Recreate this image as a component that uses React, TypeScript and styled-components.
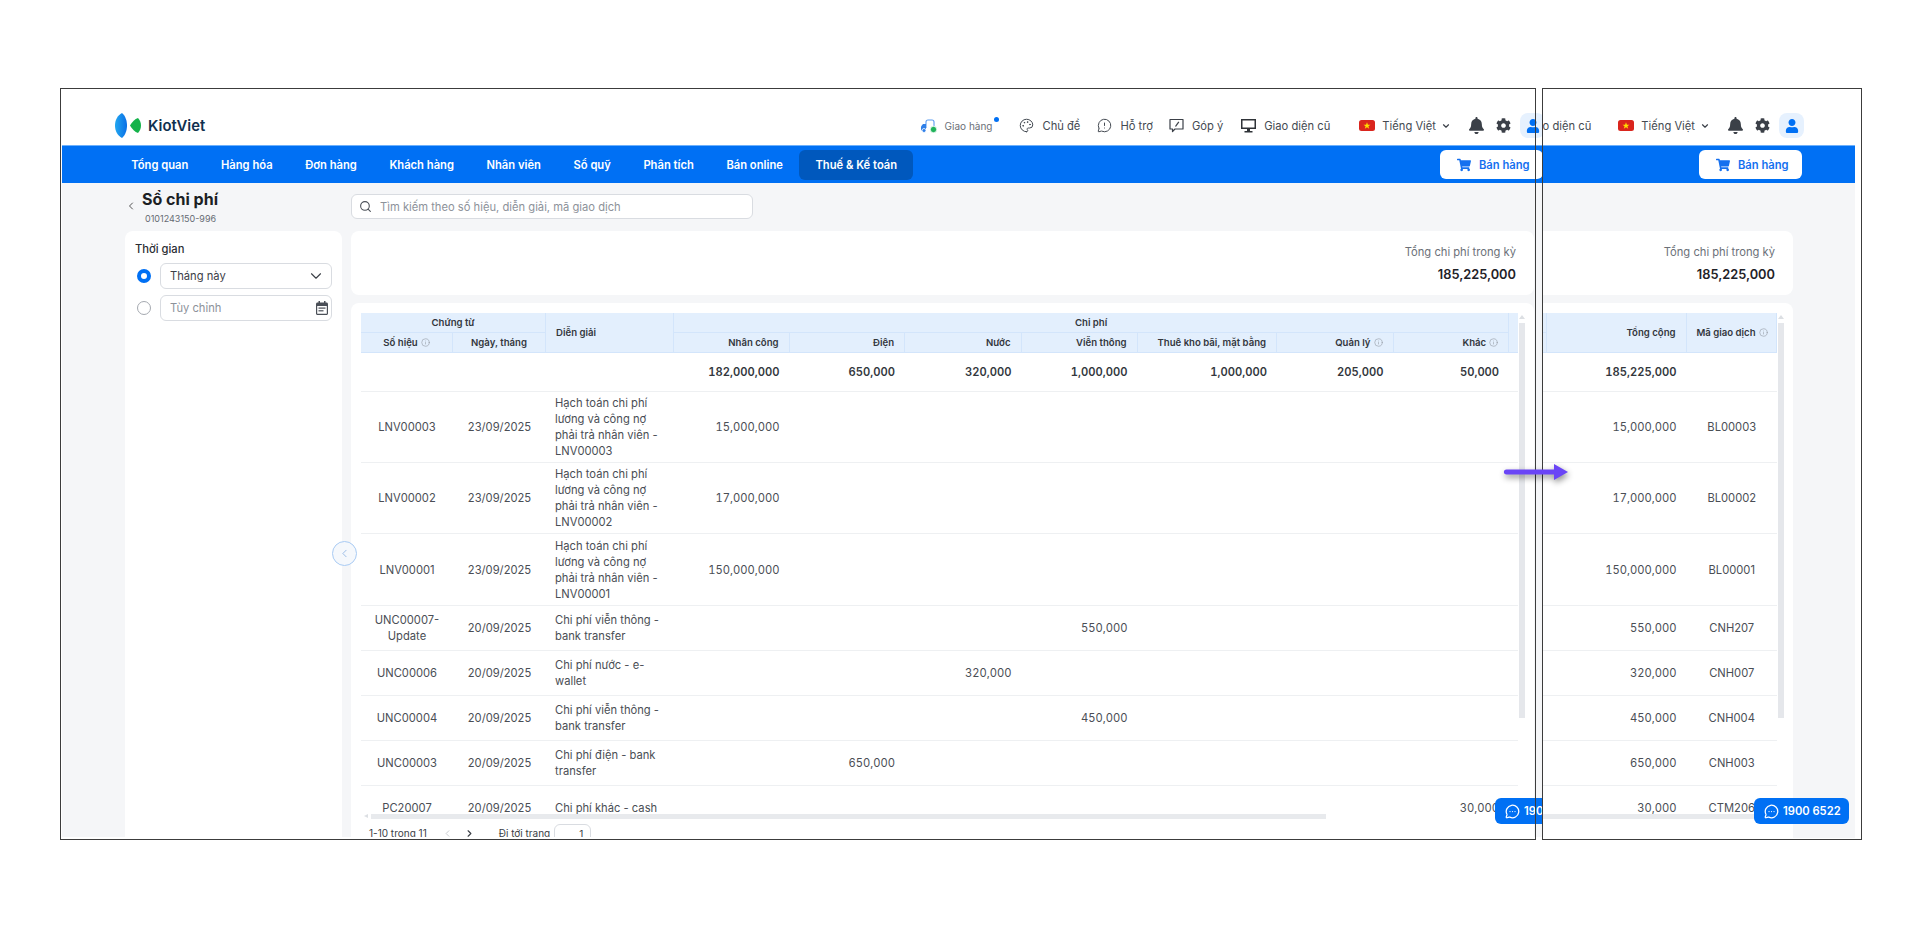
import React from "react";
import styled, { createGlobalStyle } from "styled-components";
import { Search, ChevronDown, ChevronLeft, ChevronRight, Palette, Info, MessageCircleMore, MessageCircleWarning } from "lucide-react";
import { FaBell, FaCog, FaUser, FaShoppingCart } from "react-icons/fa";

const Global = createGlobalStyle`
  html, body { margin: 0; padding: 0; background: #fff; }
  body { font-family: Inter, "Noto Sans", sans-serif; color: #333; }
  * { box-sizing: border-box; }
`;

const Canvas = styled.div`
  position: relative;
  display: flex;
  height: 942px;
  padding: 88px 0 0 60px;
  overflow: hidden;
  background: #fff;
`;

const LeftShot = styled.div`
  position: relative;
  flex: none;
  display: flex;
  width: 1482px;
  height: 752px;
  padding: 1px 0 3px 2px;
  overflow: hidden;
  &::after {
    content: "";
    position: absolute;
    top: 0;
    left: 0;
    bottom: 0;
    width: 1474px;
    border: 1px solid #3c3c3c;
    pointer-events: none;
  }
`;

const RightShot = styled.div`
  flex: none;
  display: flex;
  justify-content: flex-end;
  width: 320px;
  height: 752px;
  padding: 0 6px 1px 0;
  border: 1px solid #3c3c3c;
  overflow: hidden;
  background: #fff;
`;

const Page = styled.div`
  position: relative;
  flex: 0 0 1534px;
  display: flex;
  flex-direction: column;
  overflow: hidden;
  background: #f5f6f8;
`;

const TopBar = styled.header`
  flex: 0 0 56px;
  display: flex;
  align-items: center;
  padding: 17px 51px 0 53px;
  background: #fff;
`;

const Brand = styled.div`
  display: flex;
  align-items: center;
  gap: 6px;
  margin-right: auto;
  font-size: 14.8px;
  font-weight: 600;
  color: #10304f;
`;

const TopItem = styled.div<{ $gap?: number; $tight?: boolean }>`
  display: flex;
  align-items: center;
  gap: ${(p) => (p.$tight ? 7 : 8)}px;
  margin-left: ${(p) => p.$gap ?? 18}px;
  font-size: 11.2px;
  color: #444a52;
  white-space: nowrap;
`;

const DeliveryLabel = styled.span`
  position: relative;
  font-size: 10px;
  color: #6b7078;
  &::after {
    content: "";
    position: absolute;
    top: -3px;
    right: -7px;
    width: 5px;
    height: 5px;
    border-radius: 50%;
    background: #0070f4;
  }
`;

const Flag = styled.svg`
  display: block;
  width: 16px;
  height: 11px;
`;

const RoundIcon = styled.div<{ $gap: number }>`
  display: flex;
  margin-left: ${(p) => p.$gap}px;
  color: #3b4048;
`;

const UserTile = styled.div`
  display: flex;
  align-items: center;
  justify-content: center;
  width: 25px;
  height: 25px;
  margin-left: 9px;
  border-radius: 8px;
  background: #e6f1fe;
  color: #0070f4;
`;

const NavBar = styled.nav`
  flex: 0 0 38px;
  display: flex;
  align-items: center;
  padding: 0 53px;
  border-top: 1px solid #6db0fb;
  background: #0070f4;
`;

const NavItem = styled.div<{ $active?: boolean }>`
  display: flex;
  align-items: center;
  height: 30px;
  padding: 0 16.3px;
  border-radius: 6px;
  background: ${(p) => (p.$active ? "#0058bd" : "transparent")};
  color: #fff;
  font-size: 11.2px;
  font-weight: 600;
  white-space: nowrap;
`;

const SellButton = styled.button`
  display: flex;
  align-items: center;
  gap: 8px;
  width: 103px;
  height: 29px;
  margin-left: auto;
  padding: 0 0 0 17px;
  border: 0;
  border-radius: 6px;
  background: #fff;
  color: #1570ef;
  font: 600 11.2px Inter, sans-serif;
`;

const Body = styled.main`
  flex: 1;
  min-height: 0;
  display: grid;
  grid-template-columns: 217px 1183px;
  grid-template-rows: 48px 1fr;
  column-gap: 9px;
  padding: 0 62px 0 63px;
`;

const TitleBlock = styled.div`
  display: grid;
  grid-template-columns: 12px 1fr;
  grid-template-rows: 22px 18px;
  column-gap: 5px;
  padding-top: 5px;
  align-items: center;
`;

const BackIcon = styled.div`
  display: flex;
  margin-top: 13px;
  color: #555;
`;

const PageTitle = styled.h1`
  margin: 0;
  font-size: 16px;
  line-height: 22px;
  font-weight: 700;
  color: #1c1f24;
`;

const TaxCode = styled.div`
  grid-column: 2;
  margin-left: 3px;
  font-size: 9px;
  line-height: 14px;
  color: #666b73;
`;

const SearchBox = styled.div`
  display: flex;
  align-items: center;
  gap: 8px;
  align-self: start;
  width: 402px;
  height: 25px;
  margin-top: 11px;
  padding: 0 7px;
  border: 1px solid #d9dce1;
  border-radius: 6px;
  background: #fff;
  color: #8d929a;
  font-size: 11.2px;
`;

const SearchGlyph = styled.span`
  display: flex;
  color: #4a4f57;
`;

const SideCard = styled.aside`
  padding: 10px;
  border-radius: 8px 8px 0 0;
  background: #fff;
`;

const SideLabel = styled.div`
  margin-bottom: 6px;
  font-size: 11.2px;
  line-height: 16px;
  font-weight: 500;
  color: #2a2d33;
`;

const FilterRow = styled.div`
  display: flex;
  align-items: center;
  gap: 9px;
  margin-bottom: 6px;
  padding-left: 2px;
`;

const Radio = styled.span<{ $on?: boolean }>`
  flex: none;
  width: 14px;
  height: 14px;
  border-radius: 50%;
  border: ${(p) => (p.$on ? "4px solid #0070f4" : "1px solid #a5a9b0")};
  background: #fff;
`;

const Field = styled.div<{ $muted?: boolean }>`
  flex: 1;
  display: flex;
  align-items: center;
  justify-content: space-between;
  height: 26px;
  padding: 0 ${(p) => (p.$muted ? 3 : 6)}px 0 9px;
  border: 1px solid #d9dce1;
  border-radius: 6px;
  font-size: 11.2px;
  color: ${(p) => (p.$muted ? "#8d929a" : "#3c4047")};
`;

const Main = styled.section`
  display: flex;
  flex-direction: column;
  gap: 8px;
  min-height: 0;
`;

const SummaryCard = styled.div`
  flex: 0 0 64px;
  display: flex;
  flex-direction: column;
  align-items: flex-end;
  padding: 13px 18px 0 0;
  border-radius: 8px;
  background: #fff;
`;

const SummaryLabel = styled.div`
  font-size: 11.2px;
  line-height: 16px;
  color: #6b7078;
`;

const SummaryValue = styled.div`
  margin-top: 7px;
  font-size: 12.8px;
  line-height: 16px;
  font-weight: 600;
  color: #1f2228;
`;

const TableCard = styled.div`
  flex: 1;
  min-height: 0;
  display: flex;
  flex-direction: column;
  padding: 10px 0 0 10px;
  border-radius: 8px 8px 0 0;
  background: #fff;
`;

const Viewport = styled.div<{ $end?: boolean }>`
  position: relative;
  flex: none;
  display: flex;
  justify-content: ${(p) => (p.$end ? "flex-end" : "flex-start")};
  width: 1157px;
  height: 506px;
  overflow: hidden;
`;

const Table = styled.table`
  flex: 0 0 1378px;
  width: 1378px;
  height: max-content;
  table-layout: fixed;
  border-collapse: separate;
  border-spacing: 0;
  font-size: 11.2px;
  line-height: 16px;
  color: #4a4e55;
`;

const HeadCell = styled.th<{ $align?: string }>`
  height: 20px;
  padding: 0 10px;
  background: #e3effd;
  border-right: 1px solid #d3e5fb;
  border-bottom: 1px solid #d3e5fb;
  font-size: 9.6px;
  line-height: 12px;
  font-weight: 600;
  color: #33373d;
  text-align: ${(p) => p.$align ?? "center"};
  white-space: nowrap;
`;

const InfoGlyph = styled.span`
  display: inline-flex;
  vertical-align: -1px;
  margin-left: 3px;
  color: #9097a0;
`;

const Row = styled.tr<{ $h?: number }>`
  height: ${(p) => p.$h ?? 45}px;
`;

const Cell = styled.td<{ $align?: string; $strong?: boolean }>`
  padding: 3px ${(p) => (p.$align === "left" ? "6px" : "10px")} 3px ${(p) => (p.$align === "left" ? "9px" : "10px")};
  border-bottom: 1px solid #eef0f2;
  text-align: ${(p) => p.$align ?? "center"};
  font-variant-numeric: ${(p) => (p.$align === "right" ? "tabular-nums" : "normal")};
  font-weight: ${(p) => (p.$strong ? 600 : 400)};
  color: ${(p) => (p.$strong ? "#33373d" : "#4a4e55")};
`;

const HScroll = styled.div<{ $end?: boolean }>`
  position: absolute;
  bottom: 0;
  ${(p) => (p.$end ? "right: 0; width: 960px;" : "left: 10px; width: 955px;")}
  height: 5px;
  background: #e8eaed;
  &::before {
    content: "";
    position: absolute;
    top: 0;
    left: -7px;
    border-style: solid;
    border-width: 2.5px 4px 2.5px 0;
    border-color: transparent #dcdfe3 transparent transparent;
  }
`;

const VScroll = styled.div`
  position: absolute;
  top: 234px;
  left: 1457px;
  width: 6px;
  height: 395px;
  background: #e5e7eb;
  &::before {
    content: "";
    position: absolute;
    top: -8px;
    left: 0;
    border-style: solid;
    border-width: 0 3px 4px 3px;
    border-color: transparent transparent #dcdfe3 transparent;
  }
`;

const Pager = styled.div`
  display: flex;
  align-items: flex-start;
  height: 24px;
  margin-top: 5px;
  padding-left: 8px;
  font-size: 10px;
  line-height: 18px;
  color: #3a3e45;
`;

const PagerArrow = styled.span<{ $off?: boolean; $gap: number }>`
  display: flex;
  height: 18px;
  align-items: center;
  margin-left: ${(p) => p.$gap}px;
  color: ${(p) => (p.$off ? "#c5c8cd" : "#3a3e45")};
`;

const PagerLabel = styled.span`
  margin-left: 24px;
`;

const PagerInput = styled.div`
  width: 37px;
  height: 24px;
  margin-left: 4px;
  padding-right: 7px;
  border: 1px solid #d9dce1;
  border-radius: 6px;
  text-align: right;
  background: #fff;
`;

const Collapse = styled.button`
  position: absolute;
  top: 452px;
  left: 270px;
  display: flex;
  align-items: center;
  justify-content: center;
  width: 25px;
  height: 25px;
  padding: 0;
  border: 1px solid #a9cbf4;
  border-radius: 50%;
  background: #f5f8fc;
  color: #8fb4e3;
`;

const Chat = styled.button`
  position: absolute;
  top: 709px;
  right: 6px;
  display: flex;
  align-items: center;
  gap: 4px;
  width: 95px;
  height: 26px;
  padding: 0 0 0 10px;
  border: 0;
  border-radius: 6px;
  background: #0070f4;
  color: #fff;
  font: 600 11.2px Inter, sans-serif;
  white-space: nowrap;
`;

const MoveArrow = styled.svg`
  position: absolute;
  top: 458px;
  left: 1500px;
  width: 74px;
  height: 30px;
  filter: drop-shadow(1px 3px 3px rgba(0, 0, 0, 0.45));
`;

const widths = [92, 93, 128, 115.5, 115.5, 116.5, 116, 139.5, 116.5, 115.5, 139.5, 90.5];

type Entry = { no: string; date: string; desc: string; col: number; amount: string; code: string; h?: number };

const hach = (n: string) => `Hạch toán chi phí lương và công nợ phải trả nhân viên - ${n}`;

const entries: Entry[] = [
  { no: "LNV00003", date: "23/09/2025", desc: hach("LNV00003"), col: 0, amount: "15,000,000", code: "BL00003" },
  { no: "LNV00002", date: "23/09/2025", desc: hach("LNV00002"), col: 0, amount: "17,000,000", code: "BL00002" },
  { no: "LNV00001", date: "23/09/2025", desc: hach("LNV00001"), col: 0, amount: "150,000,000", code: "BL00001", h: 72 },
  { no: "UNC00007-Update", date: "20/09/2025", desc: "Chi phí viễn thông - bank transfer", col: 3, amount: "550,000", code: "CNH207" },
  { no: "UNC00006", date: "20/09/2025", desc: "Chi phí nước - e-wallet", col: 2, amount: "320,000", code: "CNH007" },
  { no: "UNC00004", date: "20/09/2025", desc: "Chi phí viễn thông - bank transfer", col: 3, amount: "450,000", code: "CNH004" },
  { no: "UNC00003", date: "20/09/2025", desc: "Chi phí điện - bank transfer", col: 1, amount: "650,000", code: "CNH003" },
  { no: "PC20007", date: "20/09/2025", desc: "Chi phí khác - cash", col: 6, amount: "30,000", code: "CTM206" },
];

const totals = ["182,000,000", "650,000", "320,000", "1,000,000", "1,000,000", "205,000", "50,000"];
const costCols: [string, boolean][] = [
  ["Nhân công", false],
  ["Điện", false],
  ["Nước", false],
  ["Viễn thông", false],
  ["Thuê kho bãi, mặt bằng", false],
  ["Quản lý", true],
  ["Khác", true],
];

const Tip = () => (
  <InfoGlyph>
    <Info size={9} strokeWidth={1.5} />
  </InfoGlyph>
);

const Logo = () => (
  <svg width="27" height="25" viewBox="0 0 27 25">
    <defs>
      <linearGradient id="kvb" x1="0" x2="1" y1="0" y2="0">
        <stop offset="0" stopColor="#22a7f0" />
        <stop offset="1" stopColor="#0a6fe6" />
      </linearGradient>
    </defs>
    <path d="M7 0C2.500 2.500 0 7 0 12.500C0 18 2.500 22.500 7 25C10.500 22 12 17 12 12.500C12 8 10.500 3 7 0Z" fill="url(#kvb)" />
    <path d="M15 12.500C17 9 20 6 23 5C25 7 26 10 26 12.500C26 15 25 18 23 20C20 19 17 16 15 12.500Z" fill="#14b24a" />
  </svg>
);

const DeliveryIcon = () => (
  <svg width="17" height="14" viewBox="0 0 17 14" fill="none">
    <path d="M6 9V3C6 1.800 6.800 1 8 1H12C13.200 1 14 1.800 14 3V7" stroke="#5b9bf0" strokeWidth="1.100" />
    <path d="M1 10.500V7.500L3 5H6V11.500H2C1.400 11.500 1 11.100 1 10.500Z" fill="#2f7fe8" />
    <circle cx="4" cy="11.500" r="2" fill="#2f7fe8" stroke="#fff" strokeWidth="0.800" />
    <circle cx="13.500" cy="10.500" r="3.200" fill="#1fb25a" stroke="#fff" strokeWidth="0.800" />
  </svg>
);

const FeedbackIcon = () => (
  <svg width="15" height="15" viewBox="0 0 15 15" fill="none" stroke="#3b4048" strokeWidth="1.200">
    <path d="M1 1.500H14V11H6L3.500 13.500V11H1V1.500Z" strokeLinejoin="round" />
    <path d="M9.800 3.800L6.500 8.500" strokeWidth="1.300" />
  </svg>
);

const DesktopIcon = () => (
  <svg width="15" height="14" viewBox="0 0 15 14" fill="#2f3338">
    <path d="M0 0H15V10H0ZM1.500 1.500V8.500H13.500V1.500Z" fillRule="evenodd" />
    <path d="M6 10H9V12H11.500V13.500H3.500V12H6Z" />
  </svg>
);

const CalendarIcon = () => (
  <svg width="12" height="14" viewBox="0 0 12 14" fill="#4a4f57">
    <path d="M2.500 0H4V1.500H8V0H9.500V1.500H10.500C11.300 1.500 12 2.200 12 3V12.500C12 13.300 11.300 14 10.500 14H1.500C.7 14 0 13.300 0 12.500V3C0 2.200.7 1.500 1.500 1.500H2.500ZM1.200 5V12.800H10.800V5Z" fillRule="evenodd" />
    <rect x="2.500" y="6.500" width="7" height="1.200" />
    <rect x="2.500" y="9.200" width="5" height="1.200" />
  </svg>
);

const VnFlag = () => (
  <Flag viewBox="0 0 16 11">
    <rect width="16" height="11" rx="2.500" fill="#da251d" />
    <polygon points="8,2.300 8.900,4.800 11.500,4.800 9.400,6.300 10.200,8.800 8,7.300 5.800,8.800 6.600,6.300 4.500,4.800 7.100,4.800" fill="#ffdd00" />
  </Flag>
);

const navItems = ["Tổng quan", "Hàng hóa", "Đơn hàng", "Khách hàng", "Nhân viên", "Sổ quỹ", "Phân tích", "Bán online"];

const CostTable = () => (
  <Table>
    <colgroup>
      {widths.map((w, i) => (
        <col key={i} style={{ width: w }} />
      ))}
    </colgroup>
    <thead>
      <tr>
        <HeadCell colSpan={2}>Chứng từ</HeadCell>
        <HeadCell rowSpan={2} $align="left">Diễn giải</HeadCell>
        <HeadCell colSpan={7}>Chi phí</HeadCell>
        <HeadCell rowSpan={2} $align="right">Tổng cộng</HeadCell>
        <HeadCell rowSpan={2}>Mã giao dịch<Tip /></HeadCell>
      </tr>
      <tr>
        <HeadCell>Số hiệu<Tip /></HeadCell>
        <HeadCell>Ngày, tháng</HeadCell>
        {costCols.map(([name, tip]) => (
          <HeadCell key={name} $align="right">
            {name}
            {tip && <Tip />}
          </HeadCell>
        ))}
      </tr>
    </thead>
    <tbody>
      <Row $h={39}>
        <Cell colSpan={3} />
        {totals.map((t, i) => (
          <Cell key={i} $align="right" $strong>{t}</Cell>
        ))}
        <Cell $align="right" $strong>185,225,000</Cell>
        <Cell />
      </Row>
      {entries.map((e) => (
        <Row key={e.no} $h={e.h}>
          <Cell>{e.no}</Cell>
          <Cell>{e.date}</Cell>
          <Cell $align="left">{e.desc}</Cell>
          {costCols.map((_, i) => (
            <Cell key={i} $align="right">{i === e.col ? e.amount : ""}</Cell>
          ))}
          <Cell $align="right">{e.amount}</Cell>
          <Cell>{e.code}</Cell>
        </Row>
      ))}
    </tbody>
  </Table>
);

const AppPage = ({ end }: { end?: boolean }) => (
  <Page>
    <TopBar>
      <Brand>
        <Logo />
        KiotViet
      </Brand>
      <TopItem><DeliveryIcon /><DeliveryLabel>Giao hàng</DeliveryLabel></TopItem>
      <TopItem $gap={27}><Palette size={15} strokeWidth={1.6} />Chủ đề</TopItem>
      <TopItem $gap={17}><MessageCircleWarning size={15} strokeWidth={1.6} />Hỗ trợ</TopItem>
      <TopItem $gap={16}><FeedbackIcon />Góp ý</TopItem>
      <TopItem $gap={18}><DesktopIcon />Giao diện cũ</TopItem>
      <TopItem $gap={end ? 27 : 29} $tight><VnFlag />Tiếng Việt</TopItem>
      <RoundIcon $gap={5}><ChevronDown size={10} strokeWidth={2.8} /></RoundIcon>
      <RoundIcon $gap={17}><FaBell size={17} /></RoundIcon>
      <RoundIcon $gap={11}><FaCog size={15} /></RoundIcon>
      <UserTile><FaUser size={14} /></UserTile>
    </TopBar>
    <NavBar>
      {navItems.map((n) => (
        <NavItem key={n}>{n}</NavItem>
      ))}
      <NavItem $active>Thuế &amp; Kế toán</NavItem>
      <SellButton><FaShoppingCart size={14} />Bán hàng</SellButton>
    </NavBar>
    <Body>
      <TitleBlock>
        <BackIcon><ChevronLeft size={12} strokeWidth={2} /></BackIcon>
        <PageTitle>Sổ chi phí</PageTitle>
        <TaxCode>0101243150-996</TaxCode>
      </TitleBlock>
      <SearchBox>
        <SearchGlyph><Search size={13} strokeWidth={2} /></SearchGlyph>
        Tìm kiếm theo số hiệu, diễn giải, mã giao dịch
      </SearchBox>
      <SideCard>
        <SideLabel>Thời gian</SideLabel>
        <FilterRow>
          <Radio $on />
          <Field>Tháng này<ChevronDown size={18} strokeWidth={1.5} /></Field>
        </FilterRow>
        <FilterRow>
          <Radio />
          <Field $muted>Tùy chỉnh<CalendarIcon /></Field>
        </FilterRow>
      </SideCard>
      <Main>
        <SummaryCard>
          <SummaryLabel>Tổng chi phí trong kỳ</SummaryLabel>
          <SummaryValue>185,225,000</SummaryValue>
        </SummaryCard>
        <TableCard>
          <Viewport $end={end}>
            <CostTable />
            <HScroll $end={end} />
          </Viewport>
          <Pager>
            1-10 trong 11
            <PagerArrow $off $gap={15}><ChevronLeft size={11} /></PagerArrow>
            <PagerArrow $gap={11}><ChevronRight size={11} strokeWidth={2.4} /></PagerArrow>
            <PagerLabel>Đi tới trang</PagerLabel>
            <PagerInput>1</PagerInput>
          </Pager>
        </TableCard>
      </Main>
    </Body>
    <VScroll />
    <Collapse><ChevronLeft size={13} strokeWidth={1.6} /></Collapse>
    <Chat><MessageCircleMore size={15} strokeWidth={2} />1900 6522</Chat>
  </Page>
);

export default function App() {
  return (
    <>
      <Global />
      <Canvas>
        <LeftShot>
          <AppPage />
        </LeftShot>
        <RightShot>
          <AppPage end />
        </RightShot>
        <MoveArrow viewBox="0 0 74 30">
          <path d="M6.500 11.500H54V6L68 14L54 22V16.500H6.500C3 16.500 3 11.500 6.500 11.500Z" fill="#6a45f6" />
        </MoveArrow>
      </Canvas>
    </>
  );
}
